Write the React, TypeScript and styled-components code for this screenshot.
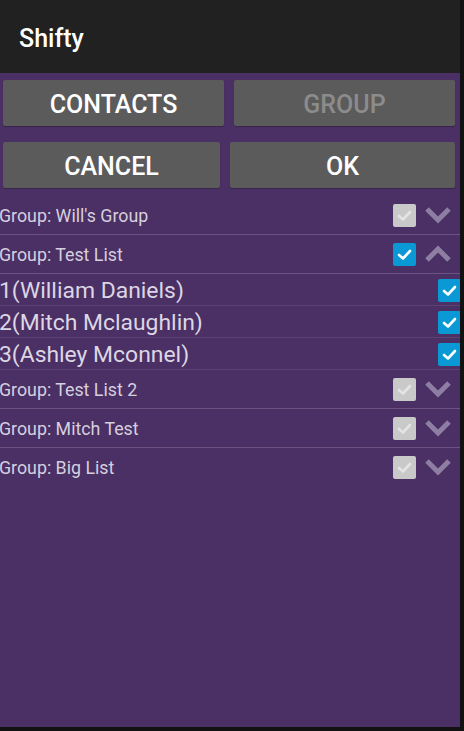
import React from "react";
import styled, { createGlobalStyle } from "styled-components";

const Global = createGlobalStyle`
  html, body { margin: 0; padding: 0; background: #121212; }
  body { font-family: Roboto, "Noto Sans", sans-serif; }
`;

const Screen = styled.div`
  width: 460px;
  height: 727px;
  background: #4a3064;
  display: flex;
  flex-direction: column;
  overflow: hidden;
`;

const AppBar = styled.div`
  height: 73px;
  flex: none;
  background: #212121;
  display: flex;
  align-items: center;
  padding-left: 19px;
  padding-top: 3px;
  box-sizing: border-box;
  color: #fff;
  font-size: 25px;
  font-weight: 500;
`;

const ButtonRow = styled.div<{ $top: number; $right: string }>`
  display: grid;
  grid-template-columns: ${(p) => p.$right};
  column-gap: 10px;
  padding: ${(p) => p.$top}px 5px 0 3px;
`;

const Btn = styled.div<{ $disabled?: boolean }>`
  height: 46px;
  box-sizing: border-box;
  padding-top: 3px;
  background: #5b5b5b;
  border-radius: 2px;
  display: flex;
  align-items: center;
  justify-content: center;
  color: ${(p) => (p.$disabled ? "#8c8c8c" : "#ffffff")};
  font-size: 25px;
  font-weight: 500;
  box-shadow: 0 1px 1px rgba(0, 0, 0, 0.25);
`;

const List = styled.div`
  margin-top: 8px;
  display: flex;
  flex-direction: column;
`;

const GroupRow = styled.div<{ $sep: boolean }>`
  height: 38px;
  display: flex;
  align-items: center;
  border-bottom: 1px solid ${(p) => (p.$sep ? "#6a5482" : "transparent")};
`;

const GroupLabel = styled.div`
  flex: 1;
  color: #d6cfdf;
  font-size: 17.8px;
  margin-left: -1px;
  padding-top: 1px;
`;

const ChildRow = styled.div`
  height: 31px;
  display: flex;
  align-items: center;
  border-bottom: 1px solid #5a4272;
`;

const ChildLabel = styled.div`
  flex: 1;
  color: #ddd6e4;
  font-size: 22.9px;
  margin-left: -1px;
  padding-top: 2px;
`;

const Box = styled.div<{ $on: boolean }>`
  width: 23px;
  height: 23px;
  border-radius: 2px;
  background: ${(p) => (p.$on ? "#0a99d5" : "#c9c9c9")};
  display: flex;
  align-items: center;
  justify-content: center;
  flex: none;
`;

const Chevron = styled.svg`
  width: 28px;
  height: 18px;
  margin: 0 8px 0 8px;
  flex: none;
`;

const CheckBox = ({ on }: { on: boolean }) => (
  <Box $on={on}>
    <svg width="17" height="17" viewBox="0 0 17 17">
      <polyline
        points="3,9 7,12.5 14,5"
        fill="none"
        stroke={on ? "#ffffff" : "#e4e4e4"}
        strokeWidth="2.6"
        strokeLinecap="round"
        strokeLinejoin="round"
      />
    </svg>
  </Box>
);

const Arrow = ({ up }: { up: boolean }) => (
  <Chevron viewBox="0 0 28 18">
    <polyline
      points={up ? "3,15 14,4 25,15" : "3,3 14,14 25,3"}
      fill="none"
      stroke="#8f7ea3"
      strokeWidth="5"
      strokeLinecap="butt"
      strokeLinejoin="miter"
    />
  </Chevron>
);

const ChildBox = styled.div`
  margin-right: -1px;
  margin-top: 1px;
`;

const groups = [
  { name: "Will's Group", on: false, open: false, kids: [] as string[] },
  {
    name: "Test List",
    on: true,
    open: true,
    kids: ["1(William Daniels)", "2(Mitch Mclaughlin)", "3(Ashley Mconnel)"],
  },
  { name: "Test List 2", on: false, open: false, kids: [] },
  { name: "Mitch Test", on: false, open: false, kids: [] },
  { name: "Big List", on: false, open: false, kids: [] },
];

export default function App() {
  return (
    <>
      <Global />
      <Screen>
        <AppBar>Shifty</AppBar>
        <ButtonRow $top={7} $right="221px 221px">
          <Btn>CONTACTS</Btn>
          <Btn $disabled>GROUP</Btn>
        </ButtonRow>
        <ButtonRow $top={16} $right="217px 225px">
          <Btn>CANCEL</Btn>
          <Btn>OK</Btn>
        </ButtonRow>
        <List>
          {groups.map((g, i) => (
            <React.Fragment key={g.name}>
              <GroupRow $sep={i < groups.length - 1}>
                <GroupLabel>Group: {g.name}</GroupLabel>
                <CheckBox on={g.on} />
                <Arrow up={g.open} />
              </GroupRow>
              {g.kids.map((k) => (
                <ChildRow key={k}>
                  <ChildLabel>{k}</ChildLabel>
                  <ChildBox>
                    <CheckBox on />
                  </ChildBox>
                </ChildRow>
              ))}
            </React.Fragment>
          ))}
        </List>
      </Screen>
    </>
  );
}
